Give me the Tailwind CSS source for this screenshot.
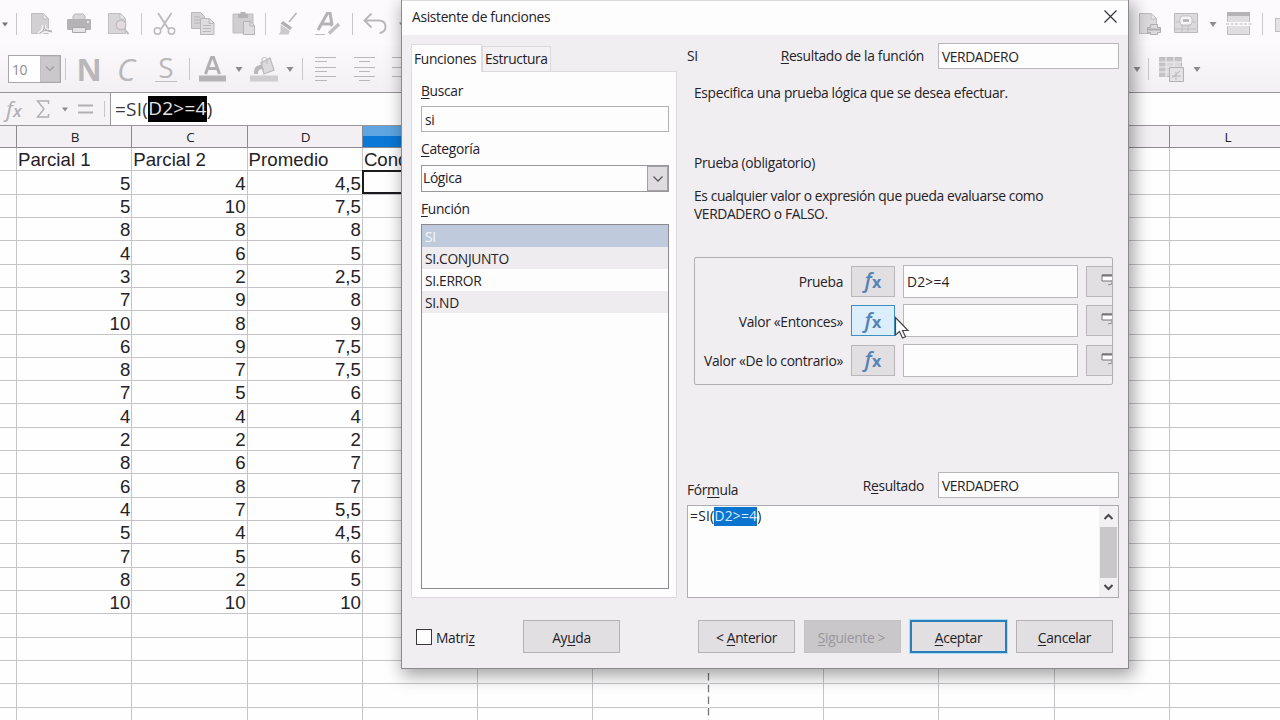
<!DOCTYPE html>
<html lang="es">
<head>
    <meta charset="UTF-8">
    <meta name="viewport" content="width=device-width, initial-scale=1.0">
    <title>Asistente de funciones</title>
    <!-- Tailwind CSS CDN -->
    <script src="https://cdn.jsdelivr.net/npm/@tailwindcss/browser@4"></script>
</head>
<body class="relative w-[1280px] h-[720px] overflow-hidden bg-[#fefefe] font-['Open_Sans','Noto_Sans',sans-serif] text-[#242226]">

    <!-- Standard toolbar -->
    <div class="flex items-center w-[1280px] h-[46px] pt-[2px] overflow-hidden bg-[#fcfafc]">
        <svg class="ml-[1px] w-[8px] h-[5px] shrink-0" viewBox="0 0 8 5" fill="#77757a"><path d="M1 0.500h6l-3 4z"/></svg>
        <div class="ml-[7px] w-px h-[22px] bg-[#c9c7ca] shrink-0"></div>
        <svg class="ml-[13px] w-[24px] h-[24px] shrink-0" viewBox="0 0 24 24"><path d="M1.500 1.500h12l5 5v15h-17z" fill="#d2d0d3" stroke="#c1bfc2"/><path d="M13 2v5h5" fill="#e6e4e7" stroke="#c1bfc2"/><path d="M9 22c4-2 5-6 5-9M13 15c2 3 5 5 9 4.500M9 22c3-3 8-4 13-3" fill="none" stroke="#f6f4f7" stroke-width="4"/><path d="M9.500 21.500c4-2 5-6 4.500-8.500M13.500 15c2 3 5 5 8.500 4.500M9.500 21.500c3-3 8-4 12-2.500" fill="none" stroke="#b5b3b6" stroke-width="1.300"/></svg>
        <svg class="ml-[13px] w-[24px] h-[24px] shrink-0" viewBox="0 0 24 24"><path d="M6 9V4l2-2h8l2 2v5" fill="#d8d6d9" stroke="#b9b7ba"/><rect x="0" y="7" width="24" height="11" rx="1" fill="#b5b3b6"/><rect x="20" y="9" width="2" height="2" fill="#e9e7ea"/><path d="M5.500 15.500h13v5h-13z" fill="#e6e4e7" stroke="#a9a7aa"/></svg>
        <svg class="ml-[16px] w-[24px] h-[24px] shrink-0" viewBox="0 0 24 24"><path d="M1.500 1.500h12l5 5v15h-17z" fill="#d8d6d9" stroke="#c1bfc2"/><path d="M13 2v5h5" fill="#eceaed" stroke="#c1bfc2"/><circle cx="14" cy="13" r="4.800" fill="#e2dadd" stroke="#bfbdc0" stroke-width="1.400"/><path d="M17.500 17l4 5" stroke="#bfbdc0" stroke-width="2"/></svg>
        <div class="ml-[10px] w-px h-[22px] bg-[#c9c7ca] shrink-0"></div>
        <svg class="ml-[11px] w-[24px] h-[24px] shrink-0" viewBox="0 0 24 24" fill="none" stroke="#bbb9bc" stroke-width="1.500"><path d="M5 1l10.500 16M18.500 1L8 17" stroke-width="1.800"/><circle cx="4.500" cy="19" r="3.200"/><circle cx="18.500" cy="19" r="3.200"/></svg>
        <svg class="ml-[13px] w-[25px] h-[24px] shrink-0" viewBox="0 0 25 24" stroke="#b9b7ba"><path d="M1.500 0.500h9l4 4v12h-13z" fill="#d5d3d6"/><path d="M4 5h6M4 8h8M4 11h8" fill="none"/><path d="M10.500 6.500h9l4.500 4.500v11.500h-13.500z" fill="#dedcdf"/><path d="M13 13.500h8M13 16.500h8M13 19.500h8M19 7v4.500h4.500" fill="none"/></svg>
        <svg class="ml-[17px] w-[24px] h-[24px] shrink-0" viewBox="0 0 24 24"><path d="M1 2h20v19H1z" fill="#d0ced1" stroke="#bfbdc0"/><path d="M6 2h10v4H6zM8.500 0h5v3h-5z" fill="#b5b3b6"/><path d="M11.500 9.500h7l4 4v9h-11z" fill="#dedcdf" stroke="#b5b3b6"/><path d="M18 10v4h4" fill="none" stroke="#b5b3b6"/></svg>
        <div class="ml-[9px] w-px h-[22px] bg-[#c9c7ca] shrink-0"></div>
        <svg class="ml-[12px] w-[22px] h-[24px] shrink-0" viewBox="0 0 22 24"><path d="M18.500 1L11 10" stroke="#b9b7ba" stroke-width="1.800"/><path d="M5 9l9 6.500-2 2.500-9.500-6.500z" fill="#b1afb2"/><path d="M2.500 12.500l9.500 6.500-1.500 3.500H0.500l2-2.500z" fill="#cbc9cc"/></svg>
        <svg class="ml-[15px] w-[26px] h-[24px] shrink-0" viewBox="0 0 26 24" fill="none"><path d="M3 18L12.500 1h2.500L17.500 16M7 12h10" stroke="#b5b3b6" stroke-width="3"/><path d="M0 22.500h10" stroke="#bbb9bc"/><path d="M13 22l11-10" stroke="#fcfafc" stroke-width="6"/><path d="M14 21.500l10-9.500" stroke="#c1bfc2" stroke-width="3.500"/></svg>
        <div class="ml-[11px] w-px h-[22px] bg-[#c9c7ca] shrink-0"></div>
        <svg class="ml-[9px] w-[25px] h-[24px] shrink-0" viewBox="0 0 25 24" fill="none" stroke="#b9b7ba" stroke-width="1.900"><path d="M9.500 1.500L2.500 8.500l7 7M2.500 8.500h14c5 0 7 3 7 6.500s-3 6-6 6"/></svg>
        <svg class="ml-[11px] w-[8px] h-[5px] shrink-0" viewBox="0 0 8 5" fill="#88868a"><path d="M1 0.500h6l-3 4z"/></svg>
        <!-- icons to the right of the dialog -->
        <svg class="ml-[732px] w-[24px] h-[24px] shrink-0" viewBox="0 0 24 24"><path d="M1.500 1.500h12l5 5v15h-17z" fill="#dcdadd" stroke="#bfbdc0"/><path d="M13 2v5h5" fill="#eceaed" stroke="#bfbdc0"/><path d="M12.500 12.500h7v3h3v5h-3v2h-7v-2h-3v-5h3z" fill="#dcdadd" stroke="#b1afb2"/><path d="M10 17.500h12" stroke="#b1afb2" stroke-width="2"/></svg>
        <svg class="ml-[12px] w-[24px] h-[22px] -mt-[3px] shrink-0" viewBox="0 0 24 22"><path d="M0.500 1.500h23v19H0.500z" fill="#dcdadd" stroke="#bbb9bc"/><path d="M2 10h4l2 4h8l2-4h4M8 14v6M14 14v6M1 17h21" fill="none" stroke="#c1bfc2"/><rect x="6" y="4" width="12" height="9" rx="3" fill="#f6f4f7" stroke="#c5c3c6"/><path d="M9 8.500h6" stroke="#b1afb2" stroke-width="2.500"/></svg>
        <svg class="ml-[11px] w-[8px] h-[5px] shrink-0" viewBox="0 0 8 5" fill="#8d8b8f"><path d="M0.500 0h7l-3.500 5z"/></svg>
        <svg class="ml-[9px] w-[26px] h-[24px] shrink-0" viewBox="0 0 26 24"><path d="M1.500 0.500h22v22h-22z" fill="#e0dee1" stroke="#bfbdc0"/><path d="M1 0h23v4H1z" fill="#b5b3b6"/><path d="M0 10h26v4H0z" fill="#fcfafc"/><path d="M0 12h26" stroke="#bbb9bc" stroke-dasharray="3 1.500"/></svg>
        <div class="ml-[10px] w-px h-[22px] bg-[#c9c7ca] shrink-0"></div>
        <div class="ml-[12px] w-[10px] h-[14px] mt-[2px] bg-[#e4e2e5] border border-[#bfbdc0] shrink-0"></div>
    </div>

    <!-- Formatting toolbar -->
    <div class="flex items-center w-[1280px] h-[46px] overflow-hidden bg-linear-to-b from-[#fbf9fb] to-[#f3f0f3] text-[#b9b7ba]">
        <div class="ml-[8px] w-[53px] h-[28px] flex border border-[#a9a7aa] bg-[#fefefe] shrink-0">
            <span class="w-[31px] pl-[3px] text-[14px] leading-[27px] tracking-[-0.500px] text-[#8f8d91]">10</span>
            <span class="grow flex items-center justify-center bg-[#cac8cb] border border-[#c1bfc2]"><svg class="w-[10px] h-[6px]" viewBox="0 0 10 6" fill="none" stroke="#a19fa2" stroke-width="1.300"><path d="M1 0.500l4 4 4-4"/></svg></span>
        </div>
        <div class="ml-[4px] w-px h-[22px] bg-[#c9c7ca] shrink-0"></div>
        <span class="ml-[10px] w-[26px] text-center text-[31px] leading-[46px] font-bold shrink-0">N</span>
        <span class="ml-[12px] w-[24px] text-center text-[31px] leading-[46px] font-medium italic shrink-0">C</span>
        <span class="ml-[17px] w-[22px] h-[25px] mt-[1px] text-center text-[28px] leading-[21px] font-medium border-b border-[#c1bfc2] shrink-0">S</span>
        <div class="ml-[12px] w-px h-[22px] bg-[#c9c7ca] shrink-0"></div>
        <svg class="ml-[9px] w-[28px] h-[26px] shrink-0" viewBox="0 0 28 26"><path d="M6.500 18L12.500 1.500h2L20.500 18M8.500 12.500h10" fill="none" stroke="#b1afb2" stroke-width="3"/><path d="M0 19.500h27v6H0z" fill="#b5b3b6"/></svg>
        <svg class="ml-[8px] w-[8px] h-[5px] shrink-0" viewBox="0 0 8 5" fill="#8d8b8f"><path d="M0.500 0h7l-3.500 5z"/></svg>
        <svg class="ml-[7px] w-[29px] h-[26px] shrink-0" viewBox="0 0 29 26"><path d="M0 19.500h28v6H0z" fill="#cfcdd0"/><path d="M11 7l9-5 4 12-10 4z" fill="#dddbde" stroke="#bbb9bc" stroke-width="1.300"/><path d="M4 18c0-7 2-9 8-9l2 5c-5-2-6 1-6 4z" fill="#b9b7ba"/><path d="M12 9V3c0-2 5-2 5 0v5" fill="none" stroke="#bbb9bc"/></svg>
        <svg class="ml-[7px] w-[8px] h-[5px] shrink-0" viewBox="0 0 8 5" fill="#8d8b8f"><path d="M0.500 0h7l-3.500 5z"/></svg>
        <div class="ml-[8px] w-px h-[22px] bg-[#c9c7ca] shrink-0"></div>
        <svg class="ml-[12px] w-[21px] h-[24px] shrink-0" viewBox="0 0 21 24" stroke="#b9b7ba"><path d="M0 0.500h21M0 4.500h12M0 10.500h21M0 14.500h12M0 19.500h21M0 23.500h12"/></svg>
        <svg class="ml-[18px] w-[21px] h-[24px] shrink-0" viewBox="0 0 21 24" stroke="#b9b7ba"><path d="M0 0.500h21M5 4.500h11M0 10.500h21M5 14.500h11M0 19.500h21M5 23.500h11"/></svg>
        <svg class="ml-[17px] w-[21px] h-[24px] shrink-0" viewBox="0 0 21 24" stroke="#b9b7ba"><path d="M0 0.500h21M9 4.500h12M0 10.500h21M9 14.500h12M0 19.500h21M9 23.500h12"/></svg>
        <svg class="ml-[720px] w-[8px] h-[5px] shrink-0" viewBox="0 0 8 5" fill="#8d8b8f"><path d="M0.500 0h7l-3.500 5z"/></svg>
        <div class="ml-[7px] w-px h-[22px] bg-[#c9c7ca] shrink-0"></div>
        <svg class="ml-[10px] w-[26px] h-[25px] shrink-0" viewBox="0 0 26 25"><path d="M0.500 0.500h22v19h-22z" fill="#d9d7da" stroke="#bbb9bc"/><path d="M0 1h23v4H0zM0 5h7v15H0z" fill="#c5c3c6"/><path d="M7 0v20M15 0v20M0 5h23M0 10h23M0 15h23" fill="none" stroke="#efedf0"/><path d="M10.500 10.500h14v14h-14z" fill="#e4e2e5" stroke="#b3b1b4"/><path d="M13 19h9M17 15v8M13 21l8-7" stroke="#b9b7ba"/></svg>
        <svg class="ml-[8px] w-[8px] h-[5px] shrink-0" viewBox="0 0 8 5" fill="#8d8b8f"><path d="M0.500 0h7l-3.500 5z"/></svg>
    </div>

    <!-- Formula bar -->
    <div class="flex h-[34px] border-y border-[#98969a] bg-[#f6f3f6] text-[#b1afb2]">
        <div class="flex items-center w-[111px] border-r border-[#98969a] shrink-0">
            <span class="ml-[6px] -mt-[3px] w-[18px] text-[22px] italic leading-none">f<span class="text-[17px] font-semibold">x</span></span>
            <svg class="ml-[12px] w-[14px] h-[18px]" viewBox="0 0 14 18" fill="none" stroke="#b1afb2" stroke-width="1.500"><path d="M12.500 4V1H1.500L8 9l-6.500 8h11v-3"/></svg>
            <svg class="ml-[11px] w-[8px] h-[5px]" viewBox="0 0 8 5" fill="#8d8b8f"><path d="M1 0.500h6l-3 4z"/></svg>
            <svg class="ml-[9px] w-[15px] h-[12px]" viewBox="0 0 15 12" stroke="#b1afb2" stroke-width="1.800"><path d="M0 2.500h15M0 9.500h15"/></svg>
            <div class="ml-[11px] w-px h-[16px] bg-[#c9c7ca]"></div>
        </div>
        <div class="grow flex items-center bg-[#fefefe] pl-[4px] text-[19px] leading-none tracking-[0.250px] text-[#3a383c]">=SI(<span class="h-[26px] leading-[25px] bg-black text-[#e6e6e6]">D2&gt;=4</span>)</div>
    </div>

    <!-- Sheet -->
    <div class="w-[1280px] h-[594px] overflow-hidden font-['Liberation_Sans',Arial,sans-serif] text-[18.670px] leading-none">
        <div id="headers" class="flex h-[22px] bg-[#f3f0f3]"></div>
        <div id="rows"></div>
    </div>
    <!-- page break -->
    <svg class="absolute left-[707px] top-[669px] w-[3px] h-[51px]" viewBox="0 0 3 51"><path d="M1.500 0v51" stroke="#fefefe" stroke-width="2"/><path d="M1.500 4v47" stroke="#78767a" stroke-width="1.300" stroke-dasharray="7.500 4.200"/></svg>
    <!-- active cell -->
    <div class="absolute left-[362px] top-[170px] w-[60px] h-[24px] border-2 border-[#1b1a1c]"></div>

    <!-- Function wizard -->
    <div class="absolute left-[401px] top-0 w-[728px] h-[669px] flex flex-col border-x border-b border-[#8c8a8e] bg-[#f1eef2] text-[13.800px] leading-[18px] tracking-[-0.320px] shadow-[3px_5px_16px_2px_rgba(0,0,0,0.350)]">
        <div class="flex items-center justify-between h-[35px] pl-[10px] pr-[11px] bg-[#fefdfe] border-t border-[#dcdadd] shrink-0">
            <span class="-mt-[2px]">Asistente de funciones</span>
            <svg class="w-[13px] h-[13px] -mt-[3px]" viewBox="0 0 13 13" stroke="#3a383c" stroke-width="1.300"><path d="M0.500 0.500l12 12M12.500 0.500l-12 12"/></svg>
        </div>

        <div class="flex h-[563px] pl-[9px] pt-[8px] shrink-0">
            <!-- left: function list -->
            <div class="w-[266px] flex flex-col shrink-0">
                <div class="flex items-end h-[28px] shrink-0">
                    <div class="relative z-10 w-[71px] h-[28px] -mb-px pl-[2px] pt-[5px] bg-[#fefdfe] border border-b-0 border-[#e0dde1]">Funciones</div>
                    <div class="w-[69px] h-[25px] pl-[2px] pt-[3px] tracking-[-0.400px] bg-[#f4f1f4] border border-b-0 border-[#dcd9dd]">Estructura</div>
                </div>
                <div class="h-[527px] flex flex-col pl-[8px] pr-[7px] bg-[#fefdfe] border border-[#dcd9dd]">
                    <div class="mt-[10px] pl-[1px]"><u class="underline-offset-2">B</u>uscar</div>
                    <div class="mt-[6px] ml-[1px] h-[26px] pl-[3px] pt-[4px] border border-[#b3b1b4]">si</div>
                    <div class="mt-[8px] pl-[1px]"><u class="underline-offset-2">C</u>ategoría</div>
                    <div class="mt-[7px] ml-[1px] h-[27px] flex border border-[#99979b]">
                        <span class="grow pl-[1px] pt-[3px]">Lógica</span>
                        <span class="w-[21px] flex items-center justify-center bg-[#dfdce0] border border-[#a3a1a5]"><svg class="w-[10px] h-[6px]" viewBox="0 0 10 6" fill="none" stroke="#5a585c" stroke-width="1.300"><path d="M0.500 0.500l4.500 4.500 4.500-4.500"/></svg></span>
                    </div>
                    <div class="mt-[8px] pl-[1px]"><u class="underline-offset-2">F</u>unción</div>
                    <div class="mt-[6px] ml-[1px] h-[365px] border border-[#8c8a8e] leading-[23px] tracking-[-0.320px]">
                        <div class="h-[22px] pl-[3px] bg-[#bfcbdc] text-[#f4f6fa]">SI</div>
                        <div class="h-[22px] pl-[3px] bg-[#efecf0]">SI.CONJUNTO</div>
                        <div class="h-[22px] pl-[3px]">SI.ERROR</div>
                        <div class="h-[22px] pl-[3px] bg-[#efecf0]">SI.ND</div>
                    </div>
                </div>
            </div>

            <!-- right: arguments -->
            <div class="ml-[10px] w-[432px] flex flex-col shrink-0">
                <div class="flex items-center h-[26px]">
                    <span>SI</span>
                    <span class="ml-auto mr-[14px]"><u class="underline-offset-2">R</u>esultado de la función</span>
                    <span class="w-[181px] h-[26px] pl-[3px] pt-[4px] bg-[#fefdfe] border border-[#b9b7bb] tracking-[-0.400px]">VERDADERO</span>
                </div>
                <div class="mt-[15px] ml-[7px]">Especifica una prueba lógica que se desea efectuar.</div>
                <div class="mt-[52px] ml-[7px]">Prueba (obligatorio)</div>
                <div class="mt-[15px] ml-[7px] h-[37px] tracking-[-0.380px]">Es cualquier valor o expresión que pueda evaluarse como<br>VERDADERO o FALSO.</div>

                <div id="args" class="mt-[33px] ml-[7px] w-[419px] h-[128px] pt-[7px] flex flex-col gap-[7.600px] border border-[#b1afb3] rounded-[2px] overflow-hidden shrink-0"></div>

                <div class="mt-[87px] flex h-[26px]">
                    <span class="mt-[9px]">Fór<u class="underline-offset-2">m</u>ula</span>
                    <span class="ml-auto mr-[14px] mt-[5px]">R<u class="underline-offset-2">e</u>sultado</span>
                    <span class="w-[181px] h-[26px] pl-[3px] pt-[4px] bg-[#fefdfe] border border-[#b9b7bb] tracking-[-0.400px]">VERDADERO</span>
                </div>
                <div class="mt-[7px] h-[93px] flex border border-[#aeacb0] bg-[#fefdfe]">
                    <div class="grow pl-[2px] pt-px tracking-[0.250px]">=SI(<span class="inline-block h-[19px] leading-[18px] bg-[#0a74cf] text-[#d8ecff]">D2&gt;=4</span>)</div>
                    <div class="w-[19px] flex flex-col items-center justify-between py-[6px] pt-[7px] bg-[#f3f0f4]">
                        <svg class="w-[9px] h-[7px]" viewBox="0 0 9 7" fill="none" stroke="#4a484c" stroke-width="2"><path d="M0.500 6L4.500 2l4 4"/></svg>
                        <div class="w-[17px] h-[51px] bg-[#cac7cb]"></div>
                        <svg class="w-[9px] h-[7px]" viewBox="0 0 9 7" fill="none" stroke="#4a484c" stroke-width="2"><path d="M0.500 1l4 4 4-4"/></svg>
                    </div>
                </div>
            </div>
        </div>

        <!-- buttons -->
        <div class="flex items-center mt-[22px] h-[33px] pl-[14px]">
            <div class="w-[16px] h-[16px] border border-[#3a383c] bg-[#fefdfe]"></div>
            <span class="ml-[4px] w-[87px] pt-[2px]">Matri<u class="underline-offset-2">z</u></span>
            <div class="w-[97px] h-[33px] leading-[33px] text-center border border-[#b5b2b6] bg-[#e2dfe3]">Ay<u class="underline-offset-2">u</u>da</div>
            <div class="ml-[78px] w-[97px] h-[33px] leading-[33px] text-center border border-[#b5b2b6] bg-[#e2dfe3]">&lt; <u class="underline-offset-2">A</u>nterior</div>
            <div class="ml-[9px] w-[97px] h-[33px] leading-[33px] pr-[2px] text-center border border-[#c5c2c6] bg-[#cac7cb] text-[#99969b]"><u class="underline-offset-2">S</u>iguiente &gt;</div>
            <div class="ml-[9px] w-[97px] h-[33px] leading-[31px] text-center border-2 border-[#2b7fb8] bg-[#e2dfe3] outline outline-[#a8dcf8]"><u class="underline-offset-2">A</u>ceptar</div>
            <div class="ml-[9px] w-[97px] h-[33px] leading-[33px] text-center border border-[#b5b2b6] bg-[#e2dfe3]"><u class="underline-offset-2">C</u>ancelar</div>
        </div>
    </div>

    <!-- mouse pointer -->
    <svg class="absolute left-[894px] top-[316px] w-[16px] h-[24px]" viewBox="0 0 16 24"><path d="M1.500 1.500v17.500l4-3.500 3 6.500 3-1.300-3-6.200h5.500z" fill="#fefefe" stroke="#4a484c" stroke-width="1.200"/></svg>

    <script>
        // Column headers
        const letters = ['', 'B', 'C', 'D', '', '', '', '', '', '', '', 'L'];
        document.getElementById('headers').innerHTML = letters.map((l, i) => {
            const width = i === 0 ? 'w-[17px]' : 'w-[115.300px]';
            const color = i === 4 ? 'bg-linear-to-b from-[#5fa6e2] from-50% to-[#0a78d6] to-50%' : '';
            return `<div class="${width} ${color} shrink-0 flex items-center justify-center pt-[2px] pl-[2px] border-r border-b border-[#8c8a8e] font-['Open_Sans','Noto_Sans',sans-serif] text-[13.500px]">${l}</div>`;
        }).join('');

        // Cell values
        const data = [
            ['Parcial 1', 'Parcial 2', 'Promedio', 'Cond'],
            ['5', '4', '4,5'], ['5', '10', '7,5'], ['8', '8', '8'], ['4', '6', '5'],
            ['3', '2', '2,5'], ['7', '9', '8'], ['10', '8', '9'], ['6', '9', '7,5'],
            ['8', '7', '7,5'], ['7', '5', '6'], ['4', '4', '4'], ['2', '2', '2'],
            ['8', '6', '7'], ['6', '8', '7'], ['4', '7', '5,5'], ['5', '4', '4,5'],
            ['7', '5', '6'], ['8', '2', '5'], ['10', '10', '10'],
            [], [], [], [], []
        ];
        document.getElementById('rows').innerHTML = data.map((row, r) => {
            let cells = '<div class="w-[17px] shrink-0 border-r border-b border-[#c6c4c8]"></div>';
            for (let c = 0; c < 11; c++) {
                const align = r === 0 ? 'justify-start pl-[1px]' : 'justify-end pr-[1px]';
                cells += `<div class="w-[115.300px] shrink-0 flex items-center pt-[3px] ${align} border-r border-b border-[#c6c4c8]">${row[c] || ''}</div>`;
            }
            return `<div class="flex h-[23.320px]">${cells}</div>`;
        }).join('');

        // Arguments of the function
        const args = [['Prueba', 'D2&gt;=4', false], ['Valor «Entonces»', '', true], ['Valor «De lo contrario»', '', false]];
        document.getElementById('args').innerHTML = args.map(([label, value, hover]) => `
            <div class="flex items-center h-[32px] shrink-0">
                <span class="w-[148px] pt-[2px] text-right shrink-0">${label}</span>
                <span class="ml-[8px] w-[44px] h-[31px] flex items-center justify-center border ${hover ? 'border-[#3d8fbf] bg-[#dceefb]' : 'border-[#b9b6ba] bg-[#e2dfe3]'} shrink-0">
                    <span class="-mt-px text-[21px] leading-none font-semibold italic text-[#5684b5] tracking-[0.300px]">f<span class="text-[16px] font-bold not-italic">x</span></span>
                </span>
                <span class="ml-[8px] w-[175px] h-[33px] pl-[3px] pt-[7px] border border-[#b9b7bb] bg-[#fefdfe] tracking-[0.200px] shrink-0">${value}</span>
                <span class="ml-[8px] w-[45px] h-[31px] pl-[14px] pt-[7px] border border-[#b9b6ba] bg-[#e2dfe3] shrink-0">
                    <svg class="w-[16px] h-[14px]" viewBox="0 0 16 14" fill="none"><path d="M1 1h14v6H1z" fill="#fefdfe" stroke="#77757a"/><path d="M1 1.500h14" stroke="#77757a" stroke-width="2"/><path d="M7 11l4-1V6" stroke="#8c8a8e"/></svg>
                </span>
            </div>`).join('');
    </script>
</body>
</html>
